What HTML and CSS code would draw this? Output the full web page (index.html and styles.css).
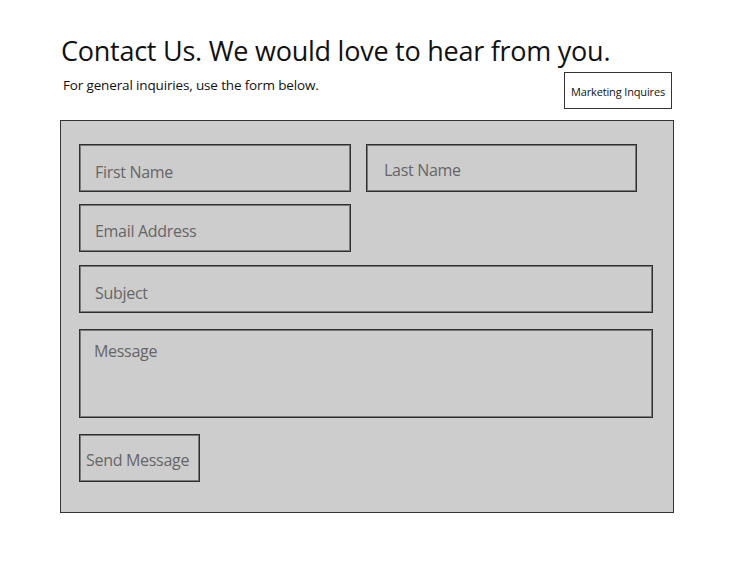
FILE: index.html
```html
<!DOCTYPE html>
<html lang="en">
<head>
<meta charset="utf-8">
<title>Contact Us</title>
<link rel="stylesheet" href="styles.css">
</head>
<body>
<main class="page">
  <h1 class="title">Contact Us. We would love to hear from you.</h1>
  <div class="intro-row">
    <p class="intro">For general inquiries, use the form below.</p>
    <div class="marketing">Marketing Inquires</div>
  </div>
  <form class="panel">
    <div class="name-row">
      <div class="field first">First Name</div>
      <div class="field last">Last Name</div>
    </div>
    <div class="field email">Email Address</div>
    <div class="field subject">Subject</div>
    <div class="field message">Message</div>
    <div class="send">Send Message</div>
  </form>
</main>
</body>
</html>
```
FILE: styles.css
```css
* { box-sizing: border-box; }
html, body { margin: 0; background: #fff; }
body {
  font-family: "Open Sans", "Noto Sans", sans-serif;
  color: #111;
}
.page {
  width: 674px;
  padding: 32px 0 0 60px;
}
.title {
  margin: 0 0 0 1px;
  font-size: 27px;
  font-weight: 400;
  line-height: 37px;
  letter-spacing: -0.25px;
  color: #111;
}
.intro-row {
  display: flex;
  justify-content: space-between;
  align-items: flex-start;
  margin-top: 3px;
}
.intro {
  margin: 4px 0 0 3px;
  font-size: 13.5px;
  line-height: 18px;
  letter-spacing: -0.15px;
}
.marketing {
  width: 108px;
  height: 37px;
  margin-right: 2px;
  border: 1px solid #333;
  display: flex;
  align-items: center;
  justify-content: center;
  font-size: 11px;
  letter-spacing: -0.15px;
  padding-top: 1px;
  color: #111;
}
.panel {
  margin: 11px 0 0;
  width: 614px;
  height: 393px;
  background: #cdcdcd;
  border: 1px solid #333;
  padding: 23px 20px 0 18px;
  display: flex;
  flex-direction: column;
  gap: 12px;
}
.name-row {
  display: flex;
  gap: 15px;
}
.field, .send {
  height: 48px;
  border: 1px solid #2e2e2e;
  box-shadow: inset 0 0 0 1px #7a7a7a;
  color: #666;
  font-size: 16px;
  letter-spacing: -0.3px;
  display: flex;
  align-items: center;
  padding: 5px 0 0 15px;
}
.first { width: 272px; padding-top: 8px; }
.last { width: 271px; padding-left: 17px; padding-top: 3px; }
.email { width: 272px; padding-top: 6px; }
.subject { width: 574px; margin-top: 1px; padding-top: 8px; }
.message {
  width: 574px;
  height: 89px;
  margin-top: 4px;
  align-items: flex-start;
  padding: 10px 0 0 14px;
}
.send {
  width: 121px;
  margin-top: 4px;
  padding: 3px 0 0 6px;
}
```
